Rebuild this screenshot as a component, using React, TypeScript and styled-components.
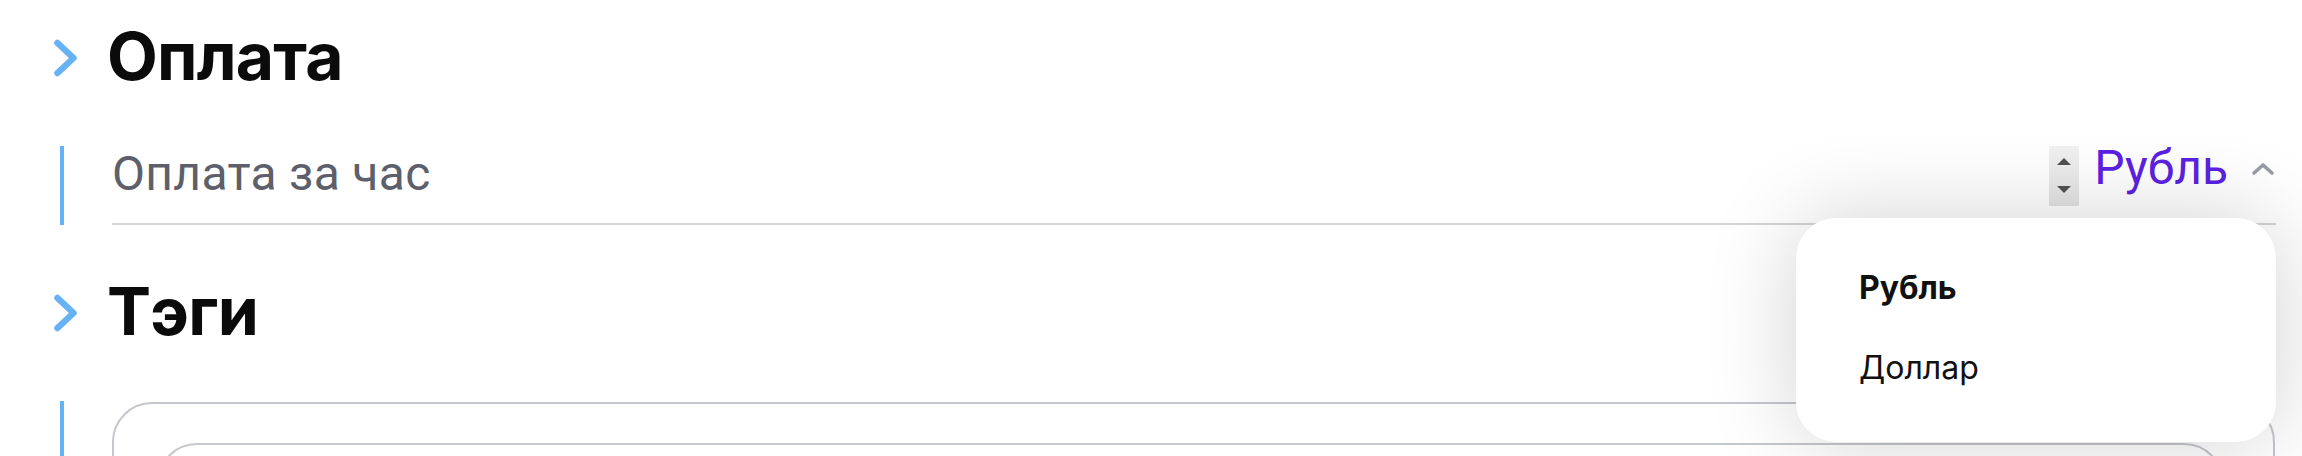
import React from 'react';
import styled, { createGlobalStyle } from 'styled-components';

const Global = createGlobalStyle`
  html, body { margin: 0; padding: 0; background: #ffffff; }
  body { font-family: Inter, "Noto Sans", sans-serif; overflow: hidden; }
`;

const Page = styled.div`
  padding: 23px 26px 0 54px;
  display: flex;
  flex-direction: column;
  gap: 53px;
`;

const Section = styled.section`
  display: flex;
  flex-direction: column;
  gap: 57px;
`;

const SectionHeader = styled.div`
  display: flex;
  align-items: center;
  gap: 29px;
  height: 66px;
`;

const ChevronIcon = styled.svg`
  flex: none;
  margin-top: 4px;
`;

const Title = styled.h2`
  margin: 0;
  font: 700 66px/66px Inter, "Noto Sans", sans-serif;
  color: #0b0b0b;
  letter-spacing: -0.8px;
`;

const SectionBody = styled.div`
  display: flex;
  gap: 48px;
  padding-left: 6px;
`;

const Rail = styled.div`
  flex: none;
  width: 4px;
  background: #66b2f5;
`;

const FieldRow = styled.div`
  position: relative;
  flex: 1;
  display: flex;
  align-items: flex-start;
  height: 77px;
  border-bottom: 2px solid #d4d5d9;
`;

const NumberBox = styled.div`
  flex: 1;
  display: flex;
  justify-content: space-between;
  align-items: flex-start;
`;

const Placeholder = styled.span`
  margin-top: 4px;
  font: 400 48px/48px Roboto, "Noto Sans", sans-serif;
  letter-spacing: 0.3px;
  color: #5d606b;
`;

const Spin = styled.div`
  width: 30px;
  height: 60px;
  box-sizing: border-box;
  padding: 12px 0 13px;
  display: flex;
  flex-direction: column;
  justify-content: space-between;
  align-items: center;
  background: linear-gradient(#f1f1f1, #e4e4e4);
`;

const Arrow = styled.span<{ $dir: 'up' | 'down' }>`
  width: 0;
  height: 0;
  border-left: 7px solid transparent;
  border-right: 7px solid transparent;
  ${(p) =>
    p.$dir === 'up'
      ? 'border-bottom: 7px solid #505050;'
      : 'border-top: 7px solid #505050;'}
`;

const CurrencyButton = styled.button`
  margin: -2px 0 0 15px;
  display: flex;
  align-items: center;
  gap: 22px;
  border: 0;
  padding: 0;
  background: none;
  font: 400 48px/48px Roboto, "Noto Sans", sans-serif;
  color: #5b22e2;
  cursor: pointer;
`;

const Menu = styled.ul`
  position: absolute;
  top: 72px;
  right: 0;
  width: 480px;
  height: 224px;
  box-sizing: border-box;
  margin: 0;
  padding: 30px 0 0 63px;
  list-style: none;
  background: #ffffff;
  border-radius: 40px;
  box-shadow: 0 0 90px rgba(0, 0, 0, 0.18);
  z-index: 10;
`;

const MenuItem = styled.li<{ $active?: boolean }>`
  padding: 24px 0;
  font: ${(p) => (p.$active ? 700 : 400)} 32px/32px Inter, "Noto Sans", sans-serif;
  color: #111111;
  cursor: pointer;
`;

const TagsBox = styled.div`
  flex: 1;
  margin: 1px 1px 0 0;
  height: 300px;
  box-sizing: border-box;
  padding: 39px 49px 0 43px;
  border: 2px solid #c5c7ce;
  border-radius: 40px;
`;

const TagsInner = styled.div`
  height: 200px;
  border: 2px solid #c5c7ce;
  border-radius: 40px;
`;

const Chevron = () => (
  <ChevronIcon width="24" height="38" viewBox="0 0 24 38">
    <path
      d="M3.5 4 L19.5 19 L3.5 34"
      fill="none"
      stroke="#66b2f5"
      strokeWidth="6.5"
      strokeLinecap="round"
      strokeLinejoin="round"
    />
  </ChevronIcon>
);

const CaretUp = () => (
  <svg width="26" height="16" viewBox="0 0 26 16">
    <path
      d="M4 13 L13 5 L22 13"
      fill="none"
      stroke="#9a9ca5"
      strokeWidth="3.6"
      strokeLinecap="round"
      strokeLinejoin="round"
    />
  </svg>
);

export default function App() {
  return (
    <>
      <Global />
      <Page>
        <Section>
          <SectionHeader>
            <Chevron />
            <Title>Оплата</Title>
          </SectionHeader>
          <SectionBody>
            <Rail />
            <FieldRow>
              <NumberBox>
                <Placeholder>Оплата за час</Placeholder>
                <Spin>
                  <Arrow $dir="up" />
                  <Arrow $dir="down" />
                </Spin>
              </NumberBox>
              <CurrencyButton>
                <span>Рубль</span>
                <CaretUp />
              </CurrencyButton>
              <Menu>
                <MenuItem $active>Рубль</MenuItem>
                <MenuItem>Доллар</MenuItem>
              </Menu>
            </FieldRow>
          </SectionBody>
        </Section>
        <Section>
          <SectionHeader>
            <Chevron />
            <Title>Тэги</Title>
          </SectionHeader>
          <SectionBody>
            <Rail />
            <TagsBox>
              <TagsInner />
            </TagsBox>
          </SectionBody>
        </Section>
      </Page>
    </>
  );
}
